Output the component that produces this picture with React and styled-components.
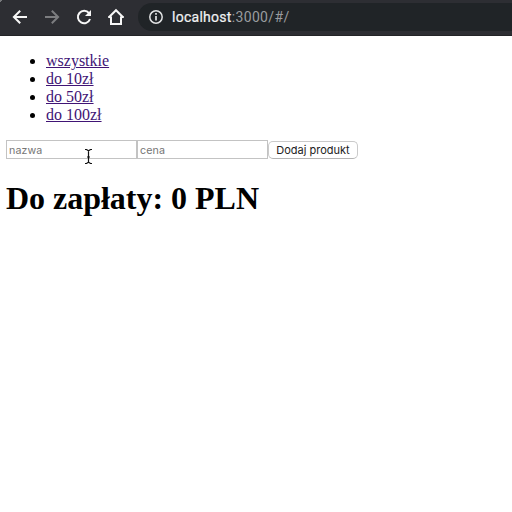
import React from 'react';
import styled, { createGlobalStyle } from 'styled-components';

const GlobalStyle = createGlobalStyle`
  * { box-sizing: border-box; }
  body { margin: 0; background: #fff; overflow: hidden; }
`;

const Window = styled.div`
  height: 512px;
  overflow: hidden;
  color: #000;
  font: 16px/18px "Liberation Serif", serif;
`;

const Toolbar = styled.header`
  display: flex;
  align-items: center;
  height: 36px;
  padding: 0 0 1px 4px;
  background: linear-gradient(135deg, #77797c 0 2px, transparent 2px), #2d2e33;
  border-bottom: 1px solid #232427;
`;

const ToolButton = styled.button`
  display: flex;
  flex: none;
  align-items: center;
  justify-content: center;
  width: 32px;
  height: 28px;
  padding: 0;
  border: 0;
  background: none;
  color: ${({ $muted }) => ($muted ? '#7c7d80' : '#f7f7f7')};
`;

const AddressBar = styled.div`
  display: flex;
  align-items: center;
  flex: 1;
  height: 28px;
  margin-left: 6px;
  padding-left: 10px;
  border-radius: 14px 0 0 14px;
  background: #202427;
`;

const Address = styled.span`
  margin-left: 8px;
  color: #9a9c9f;
  font: 14px/20px Roboto, sans-serif;
  letter-spacing: 0.36px;
`;

const Host = styled.span`
  color: #f1f2f3;
  letter-spacing: 0.27px;
  -webkit-text-stroke: 0.2px #f1f2f3;
`;

const Page = styled.main`
  padding: 16px 6px;
`;

const Filters = styled.ul`
  margin: 0 0 16px;
  padding-left: 40px;
`;

const FilterLink = styled.a`
  color: #401475;
  text-decoration: underline;
`;

const ProductForm = styled.form`
  position: relative;
  display: flex;
  height: 19px;
`;

const Field = styled.input`
  width: 131px;
  height: 19px;
  padding: 3px 2px 1px;
  border: 1px solid #c3c3c3;
  border-radius: 0;
  outline: 0;
  background: #fff;
  font: 10.7px Inter, sans-serif;
  letter-spacing: 0.08px;
  &::placeholder { color: #757575; opacity: 1; }
`;

const SubmitButton = styled.button`
  width: 90px;
  height: 18px;
  margin-top: 1px;
  padding: 0;
  border: 1px solid #cacaca;
  border-bottom-color: #b4b4b4;
  border-radius: 5px;
  background: #fff;
  color: #222;
  font: 11px/14px Inter, sans-serif;
  white-space: nowrap;
`;

const TextCursor = styled.svg`
  position: absolute;
  left: 78px;
  top: 8px;
`;

const Total = styled.h1`
  margin: 21px 0 0;
  font-size: 32px;
  line-height: 37px;
  font-weight: 700;
  letter-spacing: -0.02px;
`;

const filters = ['wszystkie', 'do 10zł', 'do 50zł', 'do 100zł'];

function Icon({ children, size = 18 }) {
  return (
    <svg width={size} height={size} viewBox={`0 0 ${size} ${size}`} fill="none" stroke="currentColor" strokeWidth="2">
      {children}
    </svg>
  );
}

export default function App() {
  return (
    <Window>
      <GlobalStyle />
      <Toolbar>
        <ToolButton aria-label="Back">
          <Icon><path d="M16 9H3M9.2 2.7 2.9 9l6.3 6.3" /></Icon>
        </ToolButton>
        <ToolButton $muted aria-label="Forward">
          <Icon><path d="M2 9h13M8.8 2.7 15.1 9l-6.3 6.3" /></Icon>
        </ToolButton>
        <ToolButton aria-label="Reload">
          <Icon>
            <path d="M14 5.2A6.2 6.2 0 1 0 15 11" />
            <path d="M16 2v6h-6z" fill="currentColor" stroke="none" />
          </Icon>
        </ToolButton>
        <ToolButton aria-label="Home">
          <Icon><path d="M1.7 9.5 9 2.2l7.3 7.3M4 8.5V16h10V8.5M1.2 9H4M14 9h2.8" /></Icon>
        </ToolButton>
        <AddressBar>
          <svg width="16" height="16" viewBox="0 0 16 16" fill="none" stroke="#e1e3e4" strokeWidth="1.5">
            <circle cx="8" cy="8" r="6.2" />
            <path d="M8 7v4.5M8 4v1.7" strokeWidth="1.7" />
          </svg>
          <Address><Host>localhost</Host>:3000/#/</Address>
        </AddressBar>
      </Toolbar>
      <Page>
        <Filters>
          {filters.map((name) => <li key={name}><FilterLink href="#/">{name}</FilterLink></li>)}
        </Filters>
        <ProductForm onSubmit={(event) => event.preventDefault()}>
          <Field placeholder="nazwa" />
          <Field placeholder="cena" />
          <SubmitButton>Dodaj produkt</SubmitButton>
          <TextCursor width="9" height="17" viewBox="0 0 9 17" fill="none">
            <path d="M1 1.5h1.5l2 1.3 2-1.3H8M4.5 2.5v12M3 9h3M1 15.5h1.5l2-1.3 2 1.3H8" stroke="#111" strokeWidth="1.2" />
          </TextCursor>
        </ProductForm>
        <Total>Do zapłaty: 0 PLN</Total>
      </Page>
    </Window>
  );
}
